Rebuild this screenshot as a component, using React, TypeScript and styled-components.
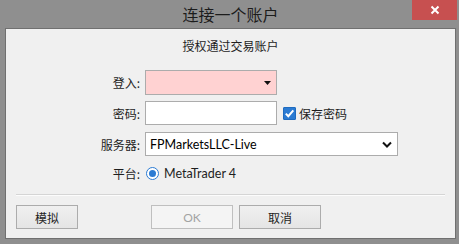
import React from "react";
import styled, { createGlobalStyle } from "styled-components";

const GlobalStyle = createGlobalStyle`
  html, body {
    margin: 0;
    padding: 0;
    background: #8f8f8f;
  }
  body {
    font-family: "Lato", "Noto Sans CJK SC", sans-serif;
    font-size: 12px;
    color: #1e1e1e;
  }
`;

const Window = styled.div`
  width: 459px;
  height: 244px;
  background: #8f8f8f;
  display: flex;
  flex-direction: column;
  box-sizing: border-box;
  padding: 0 3px 5px 5px;
`;

const TitleBar = styled.div`
  position: relative;
  height: 30px;
  display: flex;
  align-items: center;
  justify-content: center;
  font-family: "Noto Sans CJK SC", sans-serif;
  font-size: 16px;
  color: #1c1c1c;
  padding-bottom: 1px;
  box-sizing: border-box;
`;

const CloseButton = styled.div`
  position: absolute;
  right: -1px;
  top: 0;
  width: 45px;
  height: 20px;
  background: #c75050;
  display: flex;
  align-items: center;
  justify-content: center;
`;

const Panel = styled.div`
  flex: 1;
  background: #f0f0f0;
  border: 1px solid #707070;
  padding: 9px 10px 9px 10px;
  display: flex;
  flex-direction: column;
`;

const Subtitle = styled.div`
  text-align: center;
  font-family: "Noto Sans CJK SC", sans-serif;
  font-size: 12px;
  line-height: 16px;
  color: #1e1e1e;
`;

const Form = styled.div`
  display: grid;
  grid-template-columns: 124px auto;
  column-gap: 5px;
  margin-top: 16px;
  align-items: center;
`;

const Label = styled.div<{ $gap?: number }>`
  text-align: right;
  font-family: "Noto Sans CJK SC", sans-serif;
  font-size: 12px;
  margin-top: ${(p) => p.$gap ?? 0}px;
`;

const Field = styled.div<{ $gap?: number }>`
  display: flex;
  align-items: center;
  margin-top: ${(p) => p.$gap ?? 0}px;
`;

const Combo = styled.div<{ $width: number; $height: number; $bg?: string }>`
  width: ${(p) => p.$width}px;
  height: ${(p) => p.$height}px;
  box-sizing: border-box;
  border: 1px solid #acacac;
  background: ${(p) => p.$bg ?? "#ffffff"};
  display: flex;
  align-items: center;
  justify-content: space-between;
  padding: 0 5px 0 4px;
  font-size: 12.5px;
  color: #000;
`;

const Check = styled.div`
  width: 13px;
  height: 13px;
  box-sizing: border-box;
  background: #2b7bd3;
  border: 1px solid #1f6bbf;
  border-radius: 1px;
  display: flex;
  align-items: center;
  justify-content: center;
  margin-left: 6px;
  margin-right: 3px;
`;

const CheckLabel = styled.span`
  font-family: "Noto Sans CJK SC", sans-serif;
  font-size: 12px;
`;

const Radio = styled.div`
  width: 13px;
  height: 13px;
  box-sizing: border-box;
  border-radius: 50%;
  border: 1px solid #2b7bd3;
  background: #fff;
  display: flex;
  align-items: center;
  justify-content: center;
  margin-left: 1px;
  margin-right: 5px;

  &::after {
    content: "";
    width: 7px;
    height: 7px;
    border-radius: 50%;
    background: #2b7bd3;
  }
`;

const RadioText = styled.span`
  font-size: 12.5px;
`;

const Separator = styled.div`
  height: 1px;
  background: #d5d5d5;
  border-bottom: 1px solid #fcfcfc;
  margin-top: 12px;
`;

const ButtonRow = styled.div`
  display: grid;
  grid-template-columns: 129px 82px 82px;
  column-gap: 6px;
  margin-top: 9px;
`;

const Button = styled.div<{ $width: number; $disabled?: boolean }>`
  width: ${(p) => p.$width}px;
  height: 24px;
  box-sizing: border-box;
  border: 1px solid ${(p) => (p.$disabled ? "#bfbfbf" : "#acacac")};
  background: ${(p) =>
    p.$disabled ? "#f4f4f4" : "linear-gradient(#f0f0f0, #e5e5e5)"};
  color: ${(p) => (p.$disabled ? "#a3a3a3" : "#1e1e1e")};
  display: flex;
  align-items: center;
  justify-content: center;
  font-family: "Lato", "Noto Sans CJK SC", sans-serif;
  font-size: 12px;
`;

export default function App() {
  return (
    <>
      <GlobalStyle />
      <Window>
        <TitleBar>
          连接一个账户
          <CloseButton>
            <svg width="10" height="10" viewBox="0 0 10 10">
              <path d="M1.5 1.5 L8.5 8.5 M8.5 1.5 L1.5 8.5" stroke="#fff" strokeWidth="2" />
            </svg>
          </CloseButton>
        </TitleBar>
        <Panel>
          <Subtitle>授权通过交易账户</Subtitle>
          <Form>
            <Label>登入:</Label>
            <Field>
              <Combo $width={132} $height={25} $bg="#ffd2d2">
                <span />
                <svg width="7" height="4" viewBox="0 0 7 4">
                  <path d="M0 0 H7 L3.5 4 Z" fill="#111" />
                </svg>
              </Combo>
            </Field>
            <Label $gap={6}>密码:</Label>
            <Field $gap={6}>
              <Combo $width={132} $height={24} />
              <Check>
                <svg width="11" height="11" viewBox="0 0 11 11">
                  <path d="M1.8 5.6 L4.3 8.2 L9.3 2.4" stroke="#fff" strokeWidth="2" fill="none" />
                </svg>
              </Check>
              <CheckLabel>保存密码</CheckLabel>
            </Field>
            <Label $gap={7}>服务器:</Label>
            <Field $gap={7}>
              <Combo $width={253} $height={24}>
                <span>FPMarketsLLC-Live</span>
                <svg width="10" height="7" viewBox="0 0 10 7">
                  <path d="M1 1.5 L5 5.5 L9 1.5" stroke="#111" strokeWidth="2" fill="none" />
                </svg>
              </Combo>
            </Field>
            <Label $gap={9}>平台:</Label>
            <Field $gap={9}>
              <Radio />
              <RadioText>MetaTrader 4</RadioText>
            </Field>
          </Form>
          <Separator />
          <ButtonRow>
            <Button $width={62}>模拟</Button>
            <Button $width={82} $disabled>
              OK
            </Button>
            <Button $width={82}>取消</Button>
          </ButtonRow>
        </Panel>
      </Window>
    </>
  );
}
